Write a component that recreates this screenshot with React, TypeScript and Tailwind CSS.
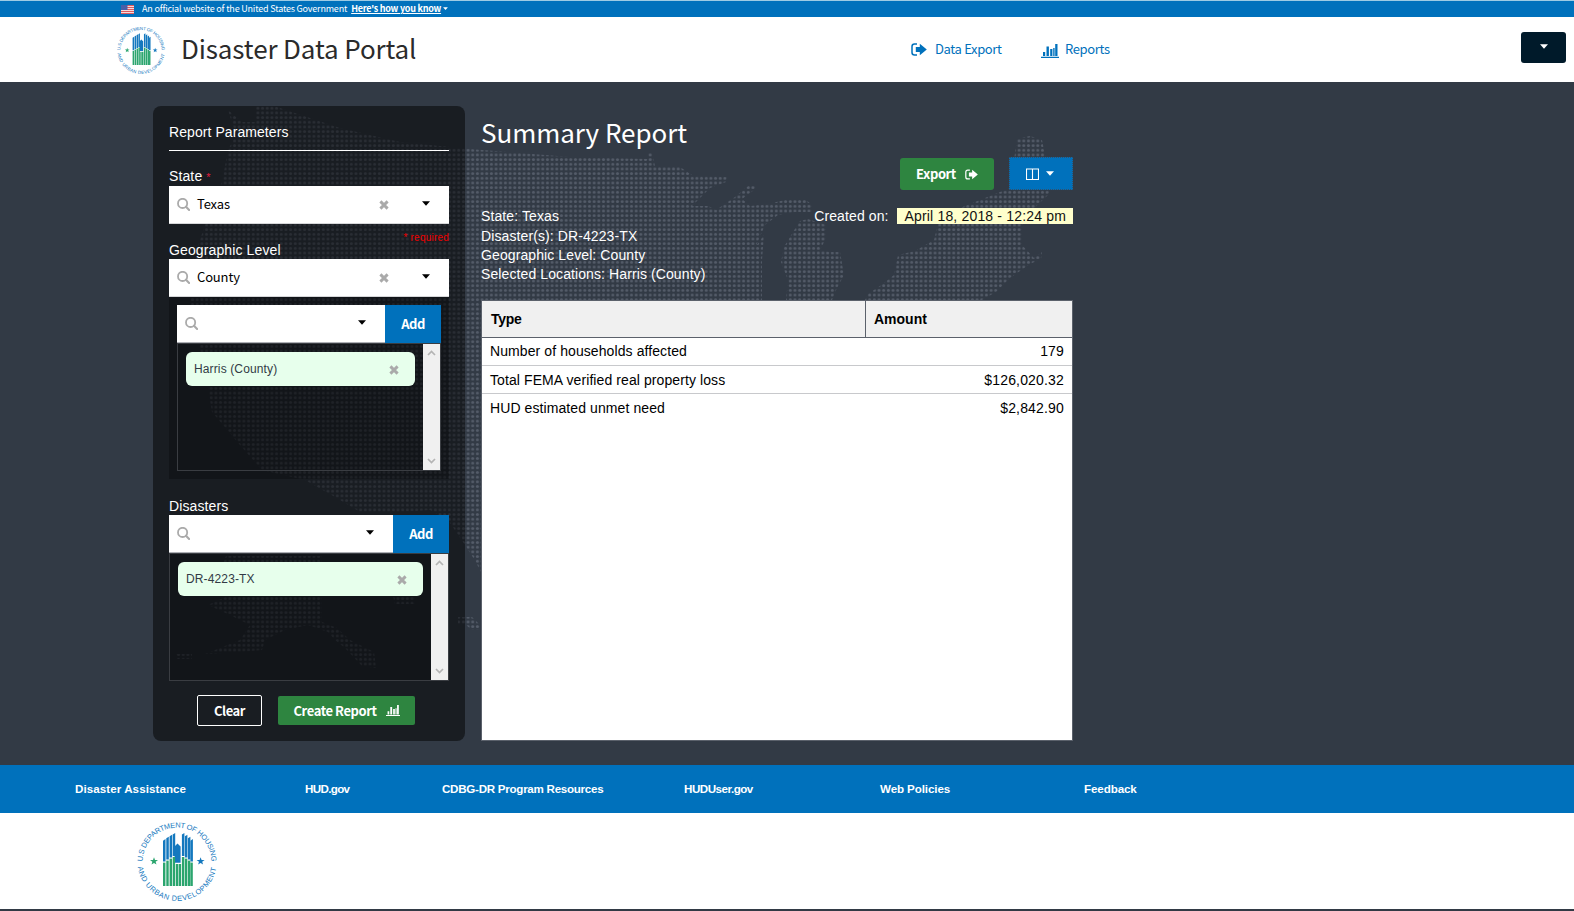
import { useId } from "react";
import type { ReactNode } from "react";

const sans = "font-['Noto_Sans_CJK_JP',sans-serif]";

function HudSeal({ size }: { size: number }) {
  const id = useId().replace(/[^a-zA-Z0-9]/g, "");
  const blue = [
    [26, 19.7, 40.6], [29.3, 17.3, 38.6], [32.6, 15.3, 36.6], [35.7, 13.6, 35],
    [44.9, 13.6, 35], [47.9, 15.3, 36.6], [50.9, 17.3, 38.6], [53.4, 19.7, 40.6],
  ];
  const green = [
    [26, 41.6], [29.3, 39.6], [32.6, 37.6], [35.7, 36], [38.8, 43], [41.7, 43],
    [44.9, 36], [47.9, 37.6], [50.9, 39.6], [53.4, 41.6],
  ];
  return (
    <svg width={size} height={size} viewBox="0 0 80 80" className="shrink-0 overflow-visible">
      <defs>
        <path id={id} d="M 5.6 41 A 34.4 34.4 0 0 1 74.4 41" />
        <path id={`${id}b`} d="M 0.6 45 A 39.7 39.7 0 0 0 79.4 45" />
      </defs>
      <g fontFamily="Liberation Sans, sans-serif" fontSize="7.4" fill="#1478be">
        <text>
          <textPath href={`#${id}`} startOffset="0.5" textLength="107">U.S DEPARTMENT OF HOUSING</textPath>
        </text>
        <text>
          <textPath href={`#${id}b`} startOffset="1" textLength="112">AND URBAN DEVELOPMENT</textPath>
        </text>
      </g>
      {blue.map(([x, top, bottom]) => (
        <path key={x} d={`M${x} ${top}l2.5 -1.6V${bottom}h-2.5z`} fill="#1478be" />
      ))}
      <path d="M37.6 41.8V25.6l1.4-1.6 1.6-1.6 1.4 1.6 1.6 1.6v16.2z" fill="#1478be" />
      {green.map(([x, top]) => (
        <rect key={x} x={x} y={top} width="2.4" height={65 - top} fill="#2ba56e" />
      ))}
      <path d="M17 36.2l1 2.8h3l-2.4 1.8.9 2.8-2.5-1.7-2.5 1.7.9-2.8-2.4-1.8h3z" fill="#2ba56e" />
      <path d="M63.6 36.2l1 2.8h3l-2.4 1.8.9 2.8-2.5-1.7-2.5 1.7.9-2.8-2.4-1.8h3z" fill="#1478be" />
    </svg>
  );
}

function ExportIcon({ className }: { className: string }) {
  return (
    <svg viewBox="0 0 16 13" className={className}>
      <path d="M6 1H3.5Q1 1 1 3.5v6Q1 12 3.5 12H6" fill="none" stroke="currentColor" strokeWidth="1.5" />
      <path d="M4.8 4h4V.8L15.8 6.5 8.8 12.2V9h-4z" fill="currentColor" />
    </svg>
  );
}

function ChartIcon({ className }: { className: string }) {
  return (
    <svg viewBox="0 0 18 14" className={className}>
      <path d="M0 12.8h18V14H0zM2 8h2.2v4H2zM5.5 2.5h2.4V12H5.5zM9.2 5h2.2v7H9.2zM12.2 4h1.4v8h-1.4zM14.2 0h2.3v12h-2.3z" fill="currentColor" />
    </svg>
  );
}

function SearchIcon() {
  return (
    <svg viewBox="0 0 13 13" className="ml-2 size-[13px] shrink-0 text-[#aaa]" fill="none" stroke="currentColor">
      <circle cx="5.6" cy="5.4" r="4.6" strokeWidth="1.8" />
      <path d="M9 8.8l3.1 3.1" strokeWidth="2.1" strokeLinecap="round" />
    </svg>
  );
}

function CrossIcon({ className }: { className: string }) {
  return (
    <svg viewBox="0 0 10 10" className={`size-[10px] shrink-0 text-[#aaa] ${className}`}>
      <path d="M1.4 1.4l7.2 7.2M8.6 1.4L1.4 8.6" stroke="currentColor" strokeWidth="2.9" />
    </svg>
  );
}

function Caret({ className }: { className: string }) {
  return (
    <svg viewBox="0 0 8 5" className={`shrink-0 ${className}`}>
      <path d="M0 .3h8L4 4.8z" fill="currentColor" />
    </svg>
  );
}

function SelectField({ value }: { value: string }) {
  return (
    <div className="flex h-[38px] items-center border-b border-[#d6d7d9] bg-white">
      <SearchIcon />
      <span className={`mb-px ml-[7px] flex-1 text-[13px] leading-5 tracking-[-0.15px] text-black ${sans}`}>{value}</span>
      <CrossIcon className="mr-[33px]" />
      <Caret className="mr-[19px] mb-[2px] h-[5px] w-2 text-black" />
    </div>
  );
}

function AddField() {
  return (
    <div className="flex h-[38px]">
      <div className="flex flex-1 items-center justify-between border-b border-[#aeb0b5] bg-white">
        <SearchIcon />
        <Caret className="mr-[19px] mb-[2px] h-[5px] w-2 text-black" />
      </div>
      <button className={`w-14 bg-[#0071bc] text-[13px] leading-5 font-bold tracking-[-0.5px] text-white ${sans}`}>Add</button>
    </div>
  );
}

function Chevron({ down }: { down?: boolean }) {
  return (
    <svg viewBox="0 0 9 6" className="h-[6px] w-[9px]" fill="none" stroke="#b4b4b4" strokeWidth="1.7">
      <path d={down ? "M1 1l3.5 3.5L8 1" : "M1 5l3.5-3.5L8 5"} />
    </svg>
  );
}

function ChipList({ label, className = "" }: { label: string; className?: string }) {
  return (
    <div className={`flex h-32 border border-[#3a3d42] ${className}`}>
      <div className="flex-1 p-2">
        <div className="flex h-[34px] items-center justify-between rounded-[6px] bg-[#e7ffec] px-2 text-[12px] tracking-[0.13px] text-[#323a45]">
          <span>{label}</span>
          <CrossIcon className="mt-[2px] mr-2" />
        </div>
      </div>
      <div className="flex w-[17px] flex-col items-center justify-between bg-[#f0f0f0] py-[6px]">
        <Chevron />
        <Chevron down />
      </div>
    </div>
  );
}

function DottedMap() {
  return (
    <svg width="1574" height="683" viewBox="0 82 1574 683" className="absolute inset-0">
      <defs>
        <pattern id="dots" width="4.67" height="4.67" x="470.4" y="147.9" patternUnits="userSpaceOnUse">
          <circle cx="2.33" cy="2.33" r="1.5" fill="#545c69" />
        </pattern>
      </defs>
      <g fill="url(#dots)">
        <path d="M228 110L242 122L256 122L256 106L274 106L340 128L400 142L470 149L520 153L570 157L648 159L648 153L652 153L655 166L680 167L692 175L727 177L726 182L710 188L692 206L708 206L716 210L735 197L748 186L756 186L754 190L742 199L750 206L768 204L785 200L805 199L812 205L812 212L795 212L778 215L765 225L756 246L764 235L762 260L762 300L786 300L788 280L781 262L784 247L793 232L800 221L808 219L826 225L826 238L820 250L830 252L840 252L844 275L836 290L832 300L865 300L868 294L880 286L894 275L898 255L915 251L934 240L938 224L960 208L985 198L1010 188L1014 160L1017 139L1030 136L1042 140L1045 155L1056 175L1048 195L1030 212L1022 225L1022 245L1034 258L1042 252L1041 259L1030 264L1010 278L996 292L980 301L980 480L481 480L482 575L476 562L465 545L448 520L430 510L400 512L360 512L335 497L305 480L262 470L240 445L212 412L205 370L190 310L193 260L205 225L222 182L228 150L236 135Z" />
        <path d="M226 556H322V590L322 622L337 628L350 640L374 652L376 668L362 666L345 648L335 640L328 632L308 625L285 630L265 640L262 650L240 652L205 654L240 640L250 625L230 615L208 605L230 595L218 575Z" />
        <path d="M176 654h16v5h-16zM393 596h22v8h-20zM458 617h14l8 8v5h-8l-6-5h-8z" />
      </g>
    </svg>
  );
}

const rows: [string, string, string][] = [
  ["Number of households affected", "179", "h-7 border-b"],
  ["Total FEMA verified real property loss", "$126,020.32", "h-7 border-b pt-[2px]"],
  ["HUD estimated unmet need", "$2,842.90", "h-7"],
];

const links: [string, string][] = [
  ["Disaster Assistance", "tracking-[0.07px]"],
  ["HUD.gov", "tracking-[-0.65px]"],
  ["CDBG-DR Program Resources", "tracking-[-0.27px]"],
  ["HUDUser.gov", "tracking-[-0.48px]"],
  ["Web Policies", "tracking-[-0.1px]"],
  ["Feedback", "tracking-[-0.1px]"],
];

function Label({ children, className = "" }: { children: ReactNode; className?: string }) {
  return <div className={`h-[19px] text-[14px] tracking-[0.12px] ${className}`}>{children}</div>;
}

export default function App() {
  return (
    <div className="flex h-[911px] w-[1574px] flex-col overflow-hidden bg-[#323a45] font-['Liberation_Sans',sans-serif] text-white">
      <div className={`flex h-[17px] items-center border-t border-[#9dcbe4] bg-[#0071bc] pl-[121px] text-[9px] leading-4 ${sans}`}>
        <svg viewBox="0 0 13 9" className="h-[9px] w-[13px]">
          <path d="M0 0h13v9H0z" fill="#f3dcdc" />
          <path d="M0 .5h13M0 2.5h13M0 4.5h13M0 6.5h13M0 8.5h13" stroke="#dd5a5e" />
          <path d="M0 0h6.5v5H0z" fill="#4a5fa8" />
        </svg>
        <span className="ml-2 tracking-[-0.19px]">An official website of the United States Government</span>
        <span className="ml-1 font-bold tracking-[-0.24px] underline">Here's how you know</span>
        <Caret className="ml-[2px] mb-[2px] h-[3px] w-[5px]" />
      </div>

      <header className={`flex h-[65px] items-center bg-white pr-2 pl-[117px] ${sans}`}>
        <HudSeal size={48} />
        <h1 className="mb-1 ml-4 w-[730px] text-[26px] leading-8 tracking-[-0.12px] text-[#2b2b2b]">Disaster Data Portal</h1>
        <nav className="flex items-center text-[13px] leading-5 tracking-[-0.35px] text-[#0071bc]">
          <ExportIcon className="h-[13px] w-4" />
          <span className="mb-[2px] ml-2 w-[106px]">Data Export</span>
          <ChartIcon className="mt-[2px] h-[14px] w-[18px]" />
          <span className="mb-[2px] ml-[6px]">Reports</span>
        </nav>
        <button className="mb-[4px] ml-auto flex h-[31px] w-[45px] items-center justify-center rounded-[3px] bg-[#001a2a]">
          <Caret className="mb-[2px] h-[5px] w-2 text-white" />
        </button>
      </header>

      <main className="relative h-[683px]">
        <DottedMap />
        <div className="relative flex gap-4 pt-6 pl-[153px]">
          <section className="h-[635px] w-[312px] rounded-lg bg-black/50 p-4">
            <h2 className="h-[29px] border-b border-white text-[14px] leading-5 tracking-[0.07px]">Report Parameters</h2>
            <Label className="mt-4 leading-[19px]">
              State <span className="text-[11px] text-[#e31c3d]">*</span>
            </Label>
            <SelectField value="Texas" />
            <div className="flex h-4 items-end justify-end text-[10px] leading-[4px] tracking-[0.22px] text-[#f00000]">* required</div>
            <Label className="leading-[21px]">Geographic Level</Label>
            <SelectField value="County" />
            <div className="h-[182px] bg-black/25 p-2">
              <AddField />
              <ChipList label="Harris (County)" />
            </div>
            <Label className="mt-[17px] leading-[21px]">Disasters</Label>
            <AddField />
            <ChipList label="DR-4223-TX" className="bg-black/25" />
            <div className={`mt-[14px] mr-[6px] flex items-center justify-center gap-4 text-[13px] font-bold tracking-[-0.42px] ${sans}`}>
              <button className="h-[31px] w-[65px] rounded-[2px] border border-white leading-5">Clear</button>
              <button className="flex h-[29px] w-[137px] items-center justify-center gap-[9px] rounded-[2px] bg-[#2e8540] leading-5">
                Create Report
                <ChartIcon className="h-[11px] w-[14px]" />
              </button>
            </div>
          </section>

          <section className="w-[592px]">
            <h2 className={`h-[51px] pt-[10px] text-[26px] leading-8 tracking-[-0.05px] ${sans}`}>Summary Report</h2>
            <div className={`flex h-[33px] items-end justify-end gap-[15px] text-[13px] font-bold tracking-[-0.42px] ${sans}`}>
              <button className="flex h-8 w-[94px] items-center justify-center gap-[9px] rounded-[3px] bg-[#2e8540] leading-5">
                Export
                <ExportIcon className="h-[11px] w-[13px]" />
              </button>
              <button className="flex h-[33px] w-16 items-center gap-[7px] border border-dotted border-[#32506b] bg-[#0071bc] pl-4">
                <svg viewBox="0 0 13 12" className="h-3 w-[13px]" fill="none" stroke="white">
                  <path d="M.5 1h12M.5.5v11h12V.5M6.5 1v10.5" strokeWidth="1.1" />
                </svg>
                <Caret className="h-[5px] w-2" />
              </button>
            </div>
            <div className="flex h-[110px] justify-between pt-[17px] text-[14px] leading-[19px] tracking-[0.1px]">
              <div>
                <p className="mb-px">State: Texas</p>
                <p>Disaster(s): DR-4223-TX</p>
                <p>Geographic Level: County</p>
                <p>Selected Locations: Harris (County)</p>
              </div>
              <p className="flex h-[18px] items-center leading-4">
                Created on: <span className="ml-2 bg-[#ffffcc] pr-[7px] pl-2 tracking-[0.17px] text-[#111]">April 18, 2018 - 12:24 pm</span>
              </p>
            </div>
            <div className="h-[441px] border border-[#5b616b] bg-white text-[14px] text-black">
              <div className="flex h-[37px] items-center border-b border-[#5b616b] bg-[#f0f0f0] font-bold">
                <div className="flex h-full w-[384px] items-center border-r border-[#5b616b] pl-[9px] tracking-[-0.3px]">Type</div>
                <div className="pl-2">Amount</div>
              </div>
              {rows.map(([label, amount, cls]) => (
                <div key={label} className={`flex items-center justify-between border-[#c8c9cc] px-2 ${cls}`}>
                  <span className="tracking-[0.09px]">{label}</span>
                  <span className="tracking-[0.17px]">{amount}</span>
                </div>
              ))}
            </div>
          </section>
        </div>
      </main>

      <div className="grid h-12 grid-cols-[230px_137px_242px_196px_204px_1fr] items-center bg-[#0071bc] pl-[75px] text-[11.6px] font-bold">
        {links.map(([link, tracking]) => (
          <a key={link} className={tracking}>{link}</a>
        ))}
      </div>
      <footer className="h-24 bg-white pt-2 pl-[137px]">
        <HudSeal size={80} />
      </footer>
    </div>
  );
}
